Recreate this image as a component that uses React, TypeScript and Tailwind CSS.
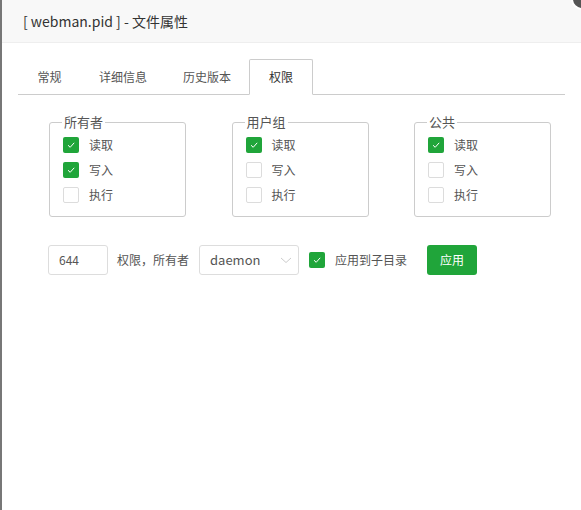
import React from "react";

const Box = ({ on }: { on: boolean }) =>
  on ? (
    <span className="w-4 h-4 rounded-[2px] bg-[#20a53a] flex items-center justify-center">
      <svg width="10" height="10" viewBox="0 0 10 10"><path d="M2 5.2 L4.2 7.3 L8.2 2.8" stroke="#fff" strokeWidth="1" fill="none" /></svg>
    </span>
  ) : (
    <span className="w-4 h-4 rounded-[2px] border border-[#dcdcdc] bg-white" />
  );

const Group = ({ title, vals }: { title: string; vals: boolean[] }) => (
  <fieldset className="w-[137px] h-[103px] border border-[#ccc] rounded-[3px] px-[13px] pt-[2px] m-0">
    <legend className="px-[2px] text-[13px] text-[#555] leading-[16px] ml-[-1px]">{title}</legend>
    {["读取", "写入", "执行"].map((t, i) => (
      <div key={t} className="flex items-center h-[25px] gap-[10px]">
        <Box on={vals[i]} />
        <span className="text-[12px] text-[#555]">{t}</span>
      </div>
    ))}
  </fieldset>
);

export default function App() {
  return (
    <div className="w-[581px] h-[510px] relative bg-white border-l-2 border-[#777] overflow-hidden" style={{ fontFamily: '"Noto Sans CJK SC", "Open Sans", sans-serif' }}>
      <div className="h-[43px] bg-[#f8f8f8] border-b border-[#eee] flex items-center pl-[21px] text-[14px] text-[#333]">[ webman.pid ] - 文件属性</div>
      <div className="absolute right-[-12px] top-[-12px] w-[22px] h-[22px] rounded-full bg-[#555] border-2 border-white" />
      <div className="mx-[16px] mt-[16px] h-[36px] border-b border-[#ccc] flex text-[12px] text-[#555]">
        <div className="w-[63px] flex items-center justify-center">常规</div>
        <div className="w-[84px] flex items-center justify-center">详细信息</div>
        <div className="w-[84px] flex items-center justify-center">历史版本</div>
        <div className="w-[64px] h-[36px] border border-[#ccc] border-b-white bg-white rounded-t-[2px] flex items-center justify-center text-[#333]">权限</div>
      </div>
      <div className="flex justify-between pl-[47px] pr-[30px] mt-[19px]">
        <Group title="所有者" vals={[true, true, false]} />
        <Group title="用户组" vals={[true, false, false]} />
        <Group title="公共" vals={[true, false, false]} />
      </div>
      <div className="flex items-center ml-[46px] mt-[28px] h-[30px] text-[12px] text-[#555]">
        <div className="w-[60px] h-[30px] border border-[#ddd] rounded-[3px] flex items-center pl-[10px]">644</div>
        <span className="ml-[9px]">权限，所有者</span>
        <div className="ml-[10px] w-[100px] h-[30px] border border-[#ddd] rounded-[3px] flex items-center justify-between pl-[10px] pr-[5px] text-[13px]">
          daemon
          <svg width="14" height="10" viewBox="0 0 14 10"><path d="M2 3 L7 7.5 L12 3" stroke="#ccc" fill="none" /></svg>
        </div>
        <span className="ml-[10px]"><Box on /></span>
        <span className="ml-[10px]">应用到子目录</span>
        <button className="ml-[20px] w-[50px] h-[30px] rounded-[3px] bg-[#20a53a] text-white text-[12px]">应用</button>
      </div>
    </div>
  );
}
